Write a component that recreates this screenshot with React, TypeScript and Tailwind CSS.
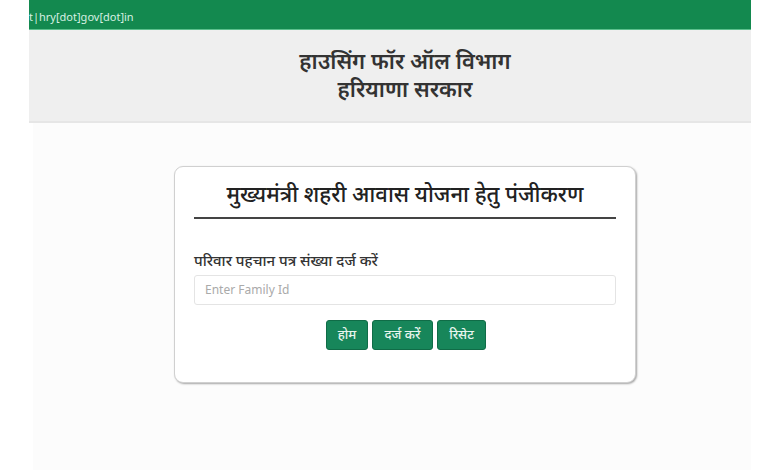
export default function App() {
  const font = { fontFamily: '"Noto Sans", "Noto Sans Devanagari", "Liberation Sans", sans-serif' };
  return (
    <div className="w-[780px] h-[470px] bg-white overflow-hidden" style={font}>
      <div className="ml-[29px] w-[722px] h-full flex flex-col">
        <div className="h-[30px] bg-[#13894f] flex items-center pt-[4px] border-b border-[#5cc08d]">
          <span className="text-[11px] text-[#d6f0e2] leading-none">t|hry[dot]gov[dot]in</span>
        </div>
        <div className="h-[93px] bg-[#efefef] flex flex-col items-center justify-center pl-[30px] pb-[4px] border-b-2 border-[#e6e6e6]">
          <div className="text-[22px] font-semibold text-[#333] leading-[28px]">हाउसिंग फॉर ऑल विभाग</div>
          <div className="text-[22px] font-semibold text-[#333] leading-[28px]">हरियाणा सरकार</div>
        </div>
        <div className="flex-1 bg-[#fcfcfc] ml-[4px] pl-[141px] pt-[43px]">
          <div className="w-[462px] h-[217px] bg-white rounded-[9px] border border-[#d0d0d0] shadow-[1px_1px_2px_rgba(0,0,0,0.35)] px-[19px] pt-[10px]">
            <div className="text-center text-[22px] font-medium text-[#222] leading-[32px]">मुख्यमंत्री शहरी आवास योजना हेतु पंजीकरण</div>
            <div className="mt-[8px] h-[2px] bg-[#444]"></div>
            <div className="mt-[32px] text-[15px] font-medium text-[#333] leading-[18px]">परिवार पहचान पत्र संख्या दर्ज करें</div>
            <div className="mt-[6px] h-[30px] border border-[#e4e4e4] rounded-[3px] flex items-center px-[10px]">
              <span className="text-[12px] text-[#aaa]">Enter Family Id</span>
            </div>
            <div className="mt-[15px] flex justify-center gap-[4px] pl-[2px]">
              <button className="h-[30px] w-[42px] bg-[#17865a] text-[#e8f5ee] text-[13px] font-medium rounded-[3px] border border-[#106c47]">होम</button>
              <button className="h-[30px] w-[61px] bg-[#17865a] text-[#e8f5ee] text-[13px] font-medium rounded-[3px] border border-[#106c47]">दर्ज करें</button>
              <button className="h-[30px] w-[49px] bg-[#17865a] text-[#e8f5ee] text-[13px] font-medium rounded-[3px] border border-[#106c47]">रिसेट</button>
            </div>
          </div>
        </div>
      </div>
    </div>
  );
}
